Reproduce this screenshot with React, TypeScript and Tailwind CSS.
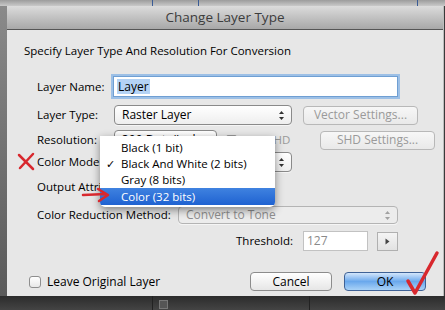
import React from "react";

const font = { fontFamily: '"Open Sans", "Noto Sans", sans-serif' };

function Arrows() {
  return (
    <svg width="7" height="11" viewBox="0 0 7 11" className="shrink-0">
      <path d="M3.5 1 L6 4 L1 4 Z" fill="#333" />
      <path d="M3.5 10 L6 7 L1 7 Z" fill="#333" />
    </svg>
  );
}

function Select({ text, w, disabled }: { text: string; w: string; disabled?: boolean }) {
  return (
    <div
      className={`${w} h-full flex items-center justify-between pl-[7px] pr-[6px] rounded-[4px] border ${
        disabled ? "border-[#b4b4b4] bg-[#ececec] text-[#8f8f8f]" : "border-[#8a8a8a] bg-gradient-to-b from-[#ffffff] to-[#eeeeee] text-[#000]"
      } shadow-[0_1px_0_rgba(255,255,255,0.6)] text-[12px] whitespace-nowrap overflow-hidden`}
    >
      <span>{text}</span>
      <span className={disabled ? "opacity-40" : ""}>
        <Arrows />
      </span>
    </div>
  );
}

function Button({ text, w, disabled, primary }: { text: string; w: string; disabled?: boolean; primary?: boolean }) {
  const cls = primary
    ? "border-[#3f6296] bg-gradient-to-b from-[#d3e6fb] via-[#6aa8ec] to-[#a9d2f7] text-[#000]"
    : disabled
    ? "border-[#b8b8b8] bg-gradient-to-b from-[#f7f7f7] to-[#e9e9e9] text-[#9a9a9a]"
    : "border-[#8c8c8c] bg-gradient-to-b from-[#ffffff] to-[#e6e6e6] text-[#000]";
  return (
    <div className={`${w} h-full flex items-center justify-center rounded-[4px] border ${cls} text-[12px] whitespace-nowrap`}>
      {text}
    </div>
  );
}

export default function App() {
  return (
    <div className="relative w-[445px] h-[310px] overflow-hidden bg-[#3a3a3a] select-none" style={font}>
      {/* top strip behind dialog */}
      <div className="h-[6px] flex bg-gradient-to-b from-[#9c9c9c] to-[#c9c9c9]">
        <div className="w-[153px] border-r border-[#3a5c96]" />
        <div className="w-[46px] border-r border-[#3a5c96]" />
        <div className="w-[219px] border-r border-[#3a5c96]" />
      </div>
      <div className="flex">
        <div className="w-[7px] h-[290px] bg-gradient-to-b from-[#8a8a8a] to-[#5a5a5a]" />
        <div className="w-[437px] h-[290px] flex flex-col border-r border-[#bdbdbd]">
          {/* title bar */}
          <div className="h-[24px] shrink-0 flex items-center justify-center bg-gradient-to-b from-[#dcdcdc] to-[#a8a8a8] border-b border-[#555] text-[13.5px] text-[#3c3c3c]">
            Change Layer Type
          </div>
          {/* body */}
          <div className="flex-1 bg-[#e7e7e7] flex flex-col text-[11.5px] text-[#000]">
            <div className="mt-[14px] h-[14px] pl-[17px] flex items-center whitespace-nowrap">
              Specify Layer Type And Resolution For Conversion
            </div>

            {/* Layer Name */}
            <div className="mt-[18px] h-[21px] pl-[30px] flex items-center">
              <div className="w-[76px]">Layer Name:</div>
              <div className="w-[285px] h-full bg-white border border-[#6f9fd3] shadow-[0_0_0_2px_#9dc0e6] flex items-center pl-[3px] text-[12px]">
                <span className="bg-[#b4d3f5] px-[1px] leading-[15px]">Layer</span>
              </div>
            </div>

            {/* Layer Type */}
            <div className="mt-[8px] h-[20px] pl-[30px] flex items-center">
              <div className="w-[77px]">Layer Type:</div>
              <Select text="Raster Layer" w="w-[178px]" />
              <div className="ml-[11px] h-[19px]">
                <Button text="Vector Settings..." w="w-[115px]" disabled />
              </div>
            </div>

            {/* Resolution */}
            <div className="mt-[5px] h-[20px] pl-[30px] flex items-center">
              <div className="w-[77px]">Resolution:</div>
              <Select text="300 Dots/Inch" w="w-[103px]" />
              <div className="ml-[9px] w-[11px] h-[11px] rounded-[2px] border border-[#9a9a9a] bg-white" />
              <span className="ml-[7px] text-[#999] w-[60px]">Use SHD</span>
              <div className="ml-[16px] h-[19px]">
                <Button text="SHD Settings..." w="w-[115px]" disabled />
              </div>
            </div>

            {/* Color Model */}
            <div className="mt-[2px] h-[20px] pl-[30px] flex items-center">
              <div className="w-[77px]">Color Model:</div>
              <Select text="Black And White (2 bits)" w="w-[178px]" />
            </div>

            {/* Output Attribute */}
            <div className="mt-[7px] h-[16px] pl-[30px] flex items-center">
              <div className="w-[77px] whitespace-nowrap">Output Attribute:</div>
              <span className="ml-[86px] whitespace-nowrap">Keep Depth</span>
            </div>

            {/* Color Reduction */}
            <div className="mt-[11px] h-[18px] pl-[30px] flex items-center">
              <div className="w-[141px] whitespace-nowrap">Color Reduction Method:</div>
              <Select text="Convert to Tone" w="w-[220px]" disabled />
            </div>

            {/* Threshold */}
            <div className="mt-[7px] h-[20px] pl-[223px] flex items-center">
              <div className="w-[73px] text-right pr-[10px]">Threshold:</div>
              <div className="w-[65px] h-full bg-white border border-[#c2c2c2] flex items-center pl-[3px] text-[#8a8a8a] text-[12px]">127</div>
              <div className="ml-[9px] w-[21px] h-[19px] border border-[#b0b0b0] bg-gradient-to-b from-[#f4f4f4] to-[#e2e2e2] flex items-center justify-center">
                <svg width="5" height="7" viewBox="0 0 5 7">
                  <path d="M0.5 0.5 L4.5 3.5 L0.5 6.5 Z" fill="#444" />
                </svg>
              </div>
            </div>

            {/* bottom row */}
            <div className="mt-[21px] h-[19px] pl-[22px] flex items-center">
              <div className="w-[12px] h-[12px] rounded-[3px] border border-[#8e8e8e] bg-gradient-to-b from-white to-[#e8e8e8]" />
              <span className="ml-[6px] w-[203px] text-[12px]">Leave Original Layer</span>
              <Button text="Cancel" w="w-[82px]" />
              <div className="ml-[12px] h-full">
                <Button text="OK" w="w-[82px]" primary />
              </div>
            </div>
          </div>
        </div>
      </div>
      {/* bottom dark strip */}
      <div className="h-[14px] flex bg-gradient-to-b from-[#2c2c2c] to-[#444]">
        <div className="w-[153px] border-r border-[#222]" />
        <div className="ml-[6px] mt-[4px] w-[9px] h-[9px] border border-[#777] bg-[#555]" />
        <div className="w-[142px] border-r border-[#222]" />
      </div>

      {/* popup menu */}
      <div className="absolute left-[100px] top-[136px] w-[175px] h-[71px] bg-white rounded-b-[5px] shadow-[0_3px_8px_rgba(0,0,0,0.45)] pt-[4px] text-[11.5px] text-[#000] overflow-hidden">
        <div className="h-[16px] flex items-center pl-[21px]">Black (1 bit)</div>
        <div className="h-[16px] flex items-center pl-[6px]">
          <span className="w-[15px] text-[11px]">✓</span>Black And White (2 bits)
        </div>
        <div className="h-[16px] flex items-center pl-[21px]">Gray (8 bits)</div>
        <div className="h-[17px] flex items-center pl-[21px] bg-gradient-to-b from-[#3f82e0] to-[#1f62d1] text-white">Color (32 bits)</div>
      </div>

      {/* red annotations */}
      <svg className="absolute left-0 top-0" width="445" height="310" viewBox="0 0 445 310" fill="none">
        <path d="M19 155 L33 169 M33 154 L20 168" stroke="#d8282e" strokeWidth="2.5" strokeLinecap="round" />
        <path d="M83 195 L106 194 M98 189 L108 195 L99 201" stroke="#d8282e" strokeWidth="2.5" strokeLinecap="round" strokeLinejoin="round" />
        <path d="M408 281 L415 293 L437 253" stroke="#d8282e" strokeWidth="3.5" strokeLinecap="round" strokeLinejoin="round" />
      </svg>
    </div>
  );
}
